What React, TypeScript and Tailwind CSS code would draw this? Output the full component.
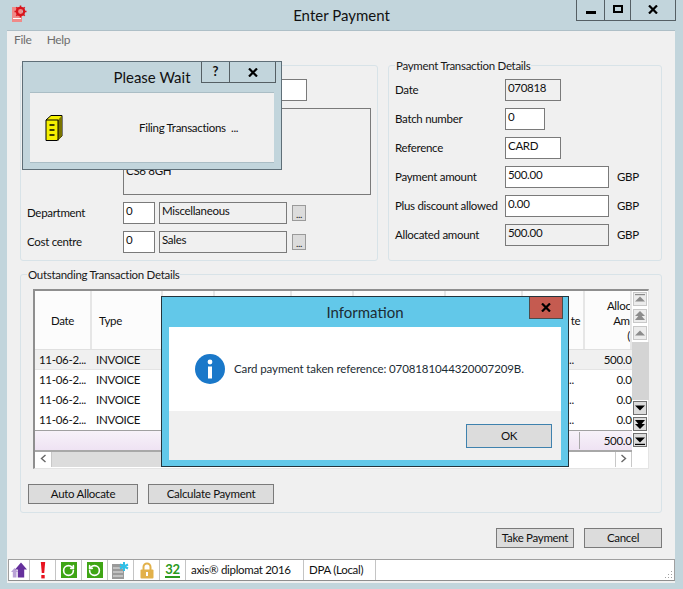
import * as React from 'react';
import { RotateCcw, RotateCw } from 'lucide-react';

const columns = [57, 71, 52, 77, 62, 92, 77, 62, 47];

function Field({ w, tone = 'white', children }: { w: string; tone?: 'white' | 'gray'; children?: React.ReactNode }) {
  return (
    <div className={`${w} h-[22px] shrink-0 border border-[#7a7a7a] px-[2px] leading-[16px] ${tone === 'white' ? 'bg-white' : 'bg-[#f0f0f0]'}`}>
      {children}
    </div>
  );
}

function Legend({ children }: { children: React.ReactNode }) {
  return <span className="absolute left-[6px] top-[-8px] bg-[#f0f0f0] px-[1px] leading-[16px] text-[#1a1a1a]">{children}</span>;
}

function PayRow({ label, w, tone, value, gbp }: { label: string; w: string; tone?: 'white' | 'gray'; value: string; gbp?: boolean }) {
  return (
    <div className="flex h-[22px] items-center">
      <span className="w-[110px] shrink-0 whitespace-nowrap">{label}</span>
      <Field w={w} tone={tone}>{value}</Field>
      {gbp && <span className="ml-[8px]">GBP</span>}
    </div>
  );
}

function CodeRow({ label, value, name }: { label: string; value: string; name: string }) {
  return (
    <div className="flex h-[22px] items-center">
      <span className="w-[96px] shrink-0">{label}</span>
      <Field w="w-[32px]">{value}</Field>
      <div className="ml-[4px]"><Field w="w-[128px]" tone="gray">{name}</Field></div>
      <div className="ml-[5px] flex h-[16px] w-[14px] items-end justify-center border border-[#9a9a9a] bg-[#dcdcdc] text-[10px] leading-[12px]">...</div>
    </div>
  );
}

function TableRow({ shade, last }: { shade?: boolean; last?: string }) {
  return (
    <div className={`flex h-[20px] items-center ${shade ? 'bg-[#f0f0f0] border-b border-[#e4e4e4]' : 'bg-white'}`}>
      <span className="w-[57px] shrink-0 pl-[4px]">11-06-2...</span>
      <span className="w-[71px] shrink-0 pl-[4px]">INVOICE</span>
      <span className="w-[360px] shrink-0" />
      <span className="w-[62px] shrink-0 pl-[46px]">..</span>
      <span className="flex w-[47px] shrink-0 justify-end overflow-hidden whitespace-nowrap">
        <span className="translate-x-[6px]">{last}</span>
      </span>
    </div>
  );
}

function ScrollBtn({ dark, kind, up }: { dark?: boolean; kind: 'one' | 'two' | 'end'; up: boolean }) {
  const fill = dark ? '#000000' : '#8c8c8c';
  return (
    <div className={`flex h-[14px] w-[14px] items-center justify-center border ${dark ? 'border-[#707070] bg-[#dcdcdc]' : 'border-[#c8c8c8] bg-[#ececec]'}`}>
      <svg width="12" height="12" viewBox="0 0 12 12" className={up ? '' : 'rotate-180'}>
        {kind === 'end' && <rect x="1" y="1" width="10" height="1.2" fill={fill} />}
        {kind === 'two' && <path d="M6 1 L11 6 H1 Z" fill={fill} />}
        <path d={kind === 'two' ? 'M6 4 L11 10 H1 Z' : 'M6 3.5 L11 8.5 H1 Z'} fill={fill} />
      </svg>
    </div>
  );
}

function Cell({ w, children }: { w: string; children?: React.ReactNode }) {
  return <div className={`${w} flex h-full shrink-0 items-center justify-center border-r border-[#c4c4c4]`}>{children}</div>;
}

export default function App() {
  return (
    <div className="relative flex h-[589px] w-[683px] flex-col overflow-hidden bg-[#c2d5dc] text-[11.5px] tracking-[-0.3px] text-[#111111] font-['Lato',sans-serif]">
      {/* title bar */}
      <div className="relative flex h-[30px] shrink-0 items-center justify-center text-[15px] tracking-[0px]">
        <svg className="absolute left-[12px] top-[5px]" width="15" height="18" viewBox="0 0 15 18">
          <rect x="0" y="2" width="10" height="15" fill="#f08a88" />
          <rect x="1" y="13" width="8" height="1" fill="#fff" />
          <circle cx="8.5" cy="6.5" r="3.6" fill="none" stroke="#d8141c" strokeWidth="2.4" />
          <path d="M8.5 0.5v2M8.5 10.5v2M2.5 6.5h2M12.5 6.5h2M4.3 2.3l1.4 1.4M11.3 9.3l1.4 1.4M4.3 10.7l1.4-1.4M11.3 3.7l1.4-1.4" stroke="#d8141c" strokeWidth="1.6" />
        </svg>
        <span>Enter Payment</span>
        <div className="absolute right-[7px] top-0 flex h-[21px] w-[100px] border-x border-b border-[#555f64]">
          <div className="flex w-[28px] items-end justify-center border-r border-[#555f64] pb-[6px]"><div className="h-[3px] w-[10px] bg-black" /></div>
          <div className="flex w-[26px] items-center justify-center border-r border-[#555f64] pb-[2px]"><div className="h-[8px] w-[10px] border-2 border-black" /></div>
          <div className="flex flex-1 items-center justify-center pb-[2px]">
            <svg width="10" height="9" viewBox="0 0 10 9"><path d="M1 0.5 L9 8.5 M9 0.5 L1 8.5" stroke="#000" strokeWidth="2.2" /></svg>
          </div>
        </div>
      </div>

      {/* client area */}
      <div className="ml-[7px] mr-[8px] flex h-[553px] shrink-0 flex-col border-t border-[#aebfc7] bg-[#f0f0f0]">
        <div className="flex h-[34px] shrink-0 gap-[15px] px-[7px] text-[12px] text-[#6e6e6e] leading-[18px]">
          <span>File</span>
          <span>Help</span>
        </div>

        <div className="flex gap-[10px] px-[13px]">
          <div className="relative flex h-[196px] w-[358px] flex-col rounded-[3px] border border-[#d8e3e8] pl-[6px] pt-[13px]">
            <div className="ml-[96px] h-[22px] w-[184px] border border-[#7a7a7a] bg-white" />
            <div className="ml-[96px] mt-[7px] h-[87px] w-[248px] border border-[#7a7a7a] bg-[#f0f0f0] px-[2px] pt-[54px] leading-[16px]">CS6 8GH</div>
            <div className="mt-[7px] flex flex-col gap-[7px]">
              <CodeRow label="Department" value="0" name="Miscellaneous" />
              <CodeRow label="Cost centre" value="0" name="Sales" />
            </div>
          </div>

          <div className="relative flex h-[196px] w-[274px] flex-col gap-[7px] rounded-[3px] border border-[#d8e3e8] pl-[6px] pt-[13px]">
            <Legend>Payment Transaction Details</Legend>
            <PayRow label="Date" w="w-[56px]" tone="gray" value="070818" />
            <PayRow label="Batch number" w="w-[40px]" value="0" />
            <PayRow label="Reference" w="w-[56px]" value="CARD" />
            <PayRow label="Payment amount" w="w-[104px]" value="500.00" gbp />
            <PayRow label="Plus discount allowed" w="w-[104px]" value="0.00" gbp />
            <PayRow label="Allocated amount" w="w-[104px]" tone="gray" value="500.00" gbp />
          </div>
        </div>

        <div className="relative mx-[13px] mt-[13px] flex h-[239px] w-[642px] flex-col rounded-[3px] border border-[#d8e3e8] pl-[12px] pt-[14px]">
          <Legend>Outstanding Transaction Details</Legend>
          <div className="flex h-[180px] w-[616px] border-2 border-b-[1px] border-r-[1px] border-[#8f8f8f] border-b-[#e4e4e4] border-r-[#e4e4e4] bg-white">
            <div className="flex w-[597px] shrink-0 flex-col overflow-hidden">
              <div className="flex h-[59px] shrink-0 border-b border-[#e0e0e0] bg-[#fcfcfc]">
                {columns.map((w, i) => (
                  <div key={i} style={{ width: w }} className="relative flex shrink-0 flex-col items-center justify-center border-r-2 border-[#e6e6e6] leading-[15px]">
                    {i === 0 && <span>Date</span>}
                    {i === 1 && <span className="mr-[32px]">Type</span>}
                    {i === 7 && <span className="ml-[45px]">te</span>}
                    {i === 8 && (
                      <div className="flex w-full flex-col items-end overflow-hidden whitespace-nowrap">
                        <span className="translate-x-[6px]">Alloca</span>
                        <span className="translate-x-[6px]">Amo</span>
                        <span>(</span>
                      </div>
                    )}
                  </div>
                ))}
              </div>
              <TableRow shade last="500.00" />
              <TableRow last="0.00" />
              <TableRow last="0.00" />
              <TableRow last="0.00" />
              <div className="flex h-[20px] shrink-0 items-center justify-end overflow-hidden border-t border-[#a0a0a0] bg-gradient-to-b from-[#f7f2f9] to-[#efe3f3]">
                <span className="translate-x-[6px] whitespace-nowrap border-l border-[#a8a8a8] pl-[24px]">500.00</span>
              </div>
              <div className="flex h-[17px] shrink-0 items-stretch border-t-2 border-[#a8a8a8] bg-white">
                <div className="flex w-[17px] items-center justify-center border-r border-[#c8c8c8] pb-[2px] text-[#666666]">
                  <svg width="7" height="9" viewBox="0 0 7 9"><path d="M5.5 1 L1.5 4.5 L5.5 8" fill="none" stroke="#666" strokeWidth="1.4" /></svg>
                </div>
                <div className="w-[460px] bg-[#dcdcdc]" />
                <div className="flex-1" />
                <div className="flex w-[17px] items-center justify-center border-x border-[#c8c8c8] pb-[2px]">
                  <svg width="7" height="9" viewBox="0 0 7 9"><path d="M1.5 1 L5.5 4.5 L1.5 8" fill="none" stroke="#666" strokeWidth="1.4" /></svg>
                </div>
              </div>
            </div>
            <div className="flex flex-1 flex-col items-start pt-[1px]">
              <div className="flex flex-col gap-[3px] pl-[1px]">
                <ScrollBtn kind="end" up />
                <ScrollBtn kind="two" up />
                <ScrollBtn kind="one" up />
              </div>
              <div className="mt-[2px] h-[58px] w-[17px] bg-[#d4d4d4]" />
              <div className="mt-[1px] flex flex-col gap-[2px] pl-[1px]">
                <ScrollBtn dark kind="one" up={false} />
                <ScrollBtn dark kind="two" up={false} />
                <ScrollBtn dark kind="end" up={false} />
              </div>
            </div>
          </div>
          <div className="ml-[-5px] mt-[15px] flex gap-[10px]">
            <button className="h-[20px] w-[110px] border border-[#7a7a7a] bg-[#dcdcdc]">Auto Allocate</button>
            <button className="h-[20px] w-[126px] border border-[#7a7a7a] bg-[#dcdcdc]">Calculate Payment</button>
          </div>
        </div>

        <div className="mt-[15px] flex justify-end gap-[10px] pr-[13px]">
          <button className="h-[20px] w-[78px] border border-[#7a7a7a] bg-[#dcdcdc]">Take Payment</button>
          <button className="h-[20px] w-[78px] border border-[#7a7a7a] bg-[#dcdcdc]">Cancel</button>
        </div>

        {/* status bar */}
        <div className="relative ml-[1px] mt-[11px] flex h-[22px] border border-[#a0a0a0] border-b-[#8e8e8e] bg-white">
          <Cell w="w-[21px]">
            <svg width="16" height="16" viewBox="0 0 16 16">
              <path d="M3.5 6 L7 10 H5.5 V15.5 H1.8 V10 H0 Z" fill="#b9a2d6" />
              <path d="M10 0.5 L16 7.5 H13.2 V15.5 H6.8 V7.5 H4 Z" fill="#65309c" />
            </svg>
          </Cell>
          <Cell w="w-[26px]">
            <svg width="6" height="17" viewBox="0 0 6 17"><path d="M0.8 0 H5.2 L4.2 11 H1.8 Z" fill="#e8131f" /><rect x="1.3" y="13" width="3.4" height="3.4" fill="#e8131f" /></svg>
          </Cell>
          <Cell w="w-[26px]">
            <div className="flex h-[16px] w-[16px] items-center justify-center bg-[#3fa515]"><RotateCw size={13} color="#ffffff" strokeWidth={3} /></div>
          </Cell>
          <Cell w="w-[26px]">
            <div className="flex h-[16px] w-[16px] items-center justify-center bg-[#3fa515]"><RotateCcw size={13} color="#ffffff" strokeWidth={3} /></div>
          </Cell>
          <Cell w="w-[26px]">
            <svg width="18" height="17" viewBox="0 0 18 17">
              <rect x="0" y="2" width="12" height="15" fill="#9a9a9a" />
              <path d="M1 6h10M1 10h10M1 14h10" stroke="#e8e8e8" strokeWidth="1" />
              <path d="M12 0v9M8 2.5l8 4M16 2.5l-8 4" stroke="#2fc0e8" strokeWidth="2" />
            </svg>
          </Cell>
          <Cell w="w-[26px]">
            <svg width="14" height="17" viewBox="0 0 14 17">
              <path d="M3.5 8 V5 a3.5 3.5 0 0 1 7 0 V8" fill="none" stroke="#e2b14a" strokeWidth="2" />
              <rect x="0.5" y="7.5" width="13" height="9" rx="1" fill="#e2b14a" />
              <rect x="6" y="10" width="2" height="4" fill="#fff" />
            </svg>
          </Cell>
          <Cell w="w-[26px]">
            <span className="border-b-2 border-[#2a9a1c] text-[13px] font-bold leading-[13px] text-[#2a9a1c]">32</span>
          </Cell>
          <div className="flex h-full w-[118px] shrink-0 items-center border-r border-[#c4c4c4] pl-[5px]">axis® diplomat 2016</div>
          <div className="flex h-full w-[72px] shrink-0 items-center border-r border-[#c4c4c4] pl-[5px]">DPA (Local)</div>
          <svg className="absolute bottom-[1px] right-[1px]" width="8" height="8" viewBox="0 0 8 8">
            <path d="M6 0h1v1H6zM3 3h1v1H3zM6 3h1v1H6zM0 6h1v1H0zM3 6h1v1H3zM6 6h1v1H6z" fill="#a0a0a0" />
          </svg>
        </div>
      </div>

      {/* Please Wait dialog */}
      <div className="absolute left-[22px] top-[61px] flex h-[109px] w-[260px] flex-col border border-[#5f6f78] bg-[#c2d5dc] px-[7px]">
        <div className="relative flex h-[30px] shrink-0 items-center justify-center text-[15px] tracking-[0px]">
          <span>Please Wait</span>
          <div className="absolute right-[-2px] top-0 flex h-[21px] w-[75px] border-b border-l border-r border-[#555f64] font-bold">
            <div className="flex w-[28px] items-center justify-center border-r border-[#555f64] text-[13px]">?</div>
            <div className="flex flex-1 items-center justify-center">
              <svg width="10" height="9" viewBox="0 0 10 9"><path d="M1 0.5 L9 8.5 M9 0.5 L1 8.5" stroke="#000" strokeWidth="2.2" /></svg>
            </div>
          </div>
        </div>
        <div className="flex h-[71px] items-center border-y border-[#aabdc5] bg-[#f0f0f0]">
          <svg className="ml-[15px]" width="18" height="26" viewBox="0 0 18 26">
            <path d="M1 5 L6 0.5 H17 V21 L12 25.5 H1 Z" fill="#f5f000" stroke="#000" strokeWidth="1" />
            <path d="M13 5 L17 0.5 V21 L13 25.5 Z" fill="#7a7400" />
            <path d="M1 5 H13 V25.5" fill="none" stroke="#000" strokeWidth="1" />
            <path d="M4.5 10h5M4.5 15h5M4.5 20h5" stroke="#000" strokeWidth="1.6" />
          </svg>
          <span className="ml-[76px]">Filing Transactions&nbsp; ...</span>
        </div>
      </div>

      {/* Information dialog */}
      <div className="absolute left-[161px] top-[296px] flex h-[171px] w-[408px] flex-col border border-[#24343c] bg-[#62c8e9] px-[7px] pb-[6px]">
        <div className="relative flex h-[30px] shrink-0 items-center justify-center text-[15px] tracking-[0px] text-[#1c2c34]">
          <span>Information</span>
          <div className="absolute right-[-2px] top-0 flex h-[22px] w-[34px] items-center justify-center border-x border-b border-[#4c4c4c] bg-[#c55b50]">
            <svg width="10" height="9" viewBox="0 0 10 9"><path d="M1 0.5 L9 8.5 M9 0.5 L1 8.5" stroke="#000" strokeWidth="2.2" /></svg>
          </div>
        </div>
        <div className="flex h-[84px] shrink-0 items-center bg-white pl-[26px] tracking-[-0.1px] text-[#1c2c34]">
          <svg width="30" height="30" viewBox="0 0 30 30">
            <circle cx="15" cy="15" r="15" fill="#1a78c9" />
            <circle cx="15" cy="8" r="2.4" fill="#fff" />
            <rect x="13" y="12.5" width="4" height="12" fill="#fff" />
          </svg>
          <span className="ml-[9px]">Card payment taken reference: 0708181044320007209B.</span>
        </div>
        <div className="flex flex-1 items-start justify-end bg-[#f0f0f0] pr-[9px] pt-[13px]">
          <button className="h-[24px] w-[86px] border border-[#3f82ae] bg-[#dcdcdc]">OK</button>
        </div>
      </div>
    </div>
  );
}
